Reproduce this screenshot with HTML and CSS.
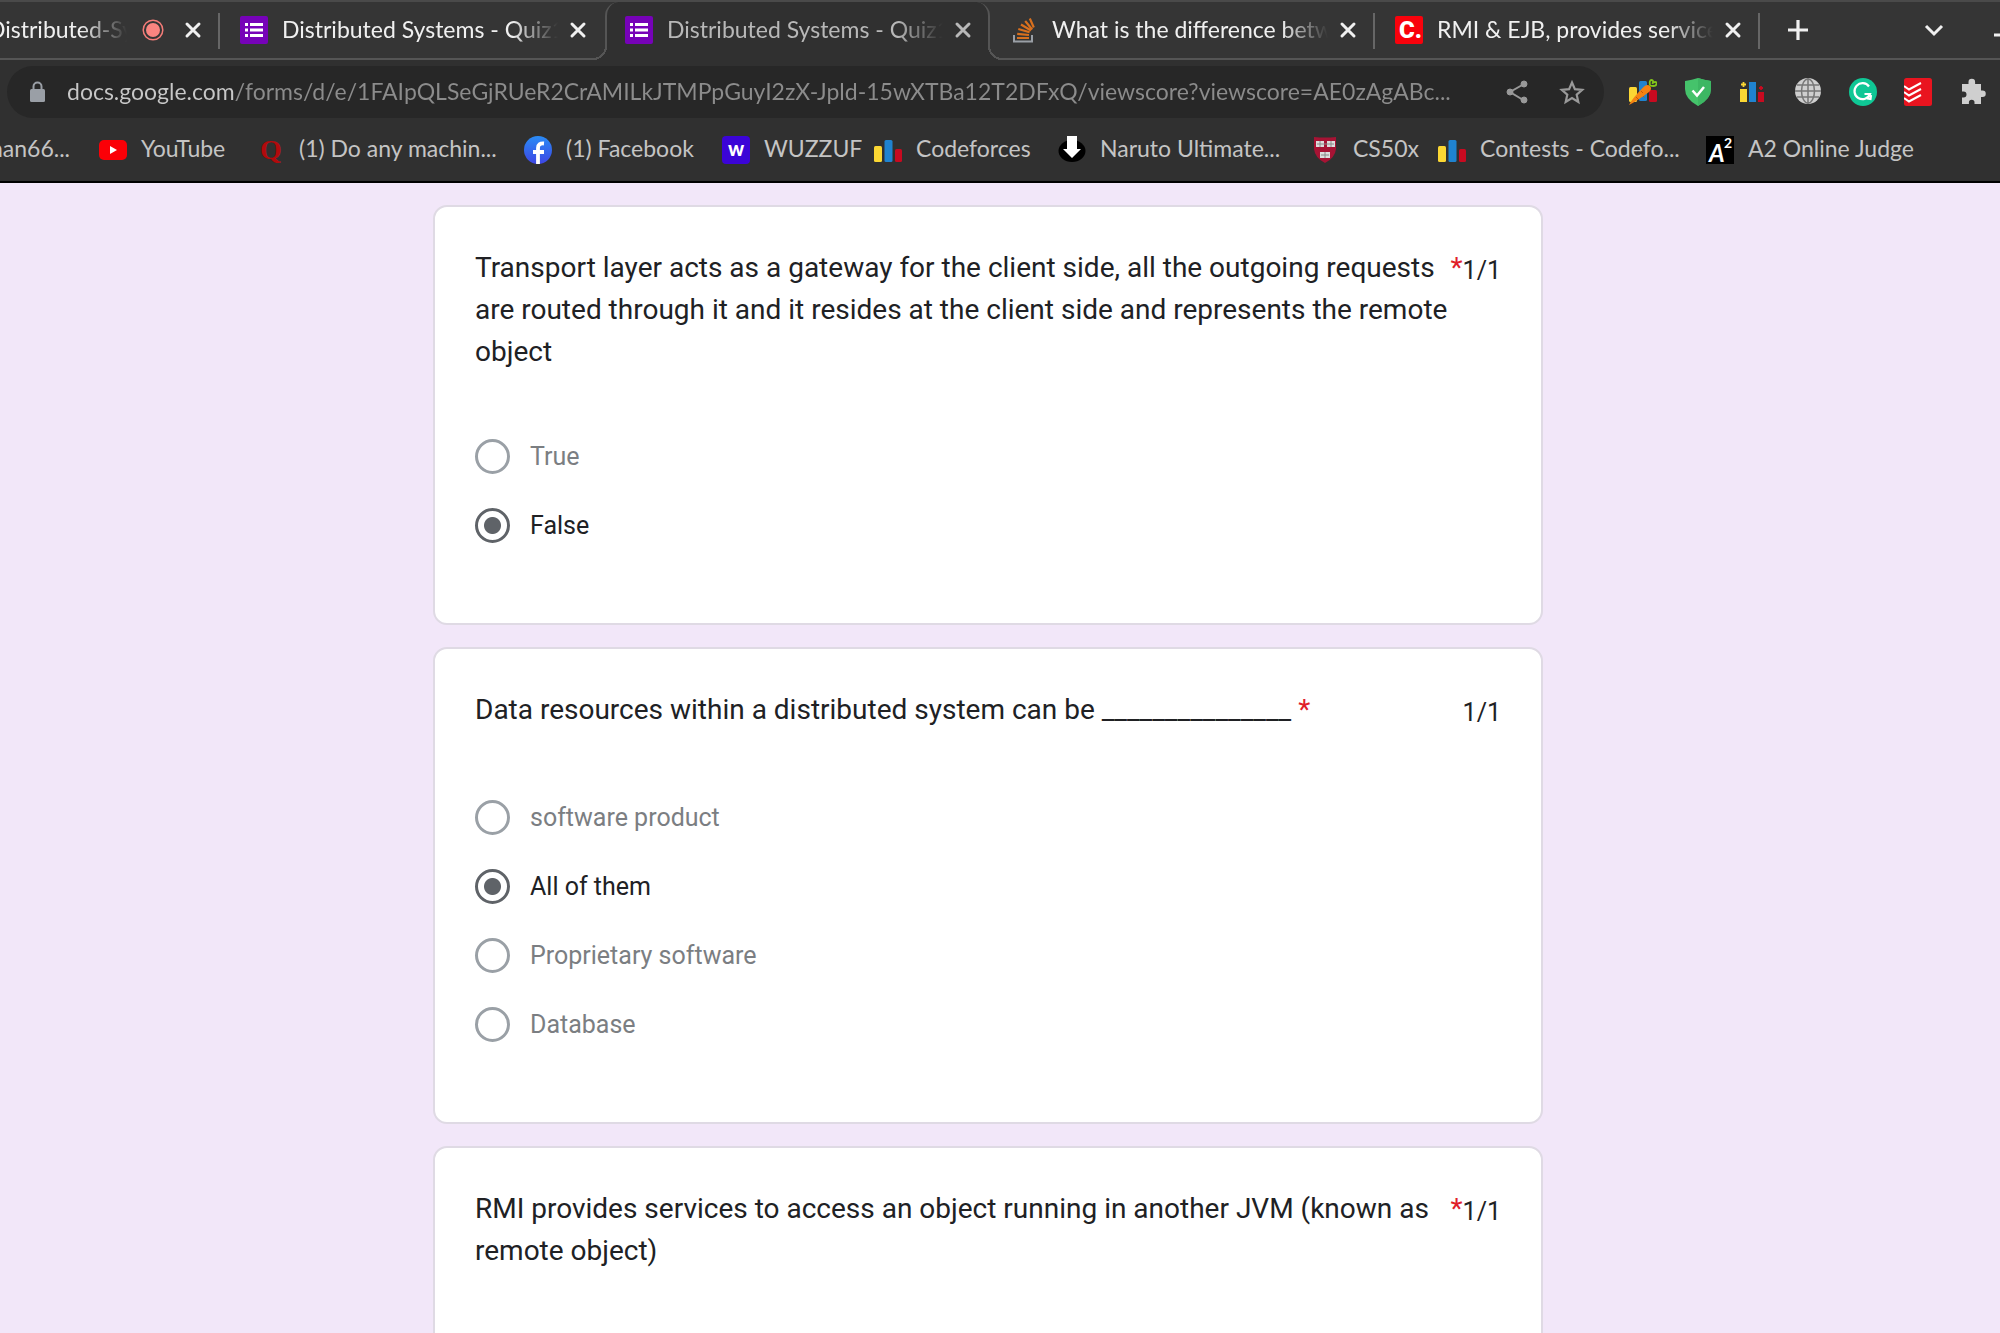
FILE: index.html
```html
<!DOCTYPE html>
<html lang="en">
<head>
<meta charset="utf-8">
<title>Distributed Systems - Quiz</title>
<link rel="stylesheet" href="styles.css">
</head>
<body>
<svg class="defs" aria-hidden="true">
  <symbol id="close" viewBox="0 0 28 28"><path d="M8 8l12 12M20 8L8 20" stroke="currentColor" stroke-width="3" stroke-linecap="round" fill="none"/></symbol>
  <symbol id="forms" viewBox="0 0 28 28"><rect width="28" height="28" rx="2" fill="#7602b8"/><path d="M5 7h3v3H5zM10 7h13v3H10zM5 12.500h3v3H5zM10 12.500h13v3H10zM5 18h3v3H5zM10 18h13v3H10z" fill="#fff"/></symbol>
  <symbol id="bars" viewBox="0 0 28 28"><rect y="10" width="8" height="16" rx="1.500" fill="#fbd733"/><rect x="10.500" y="4" width="8" height="22" rx="1.500" fill="#1f83d0"/><rect x="21" y="13" width="7" height="13" rx="1.500" fill="#c80a20"/></symbol>
</svg>
<header class="browser">
  <div class="tabs" role="tablist">
    <div class="tab tab-cut" role="tab">
      <span class="tab-title">Distributed-Sy</span>
      <svg class="icon" viewBox="0 0 28 28"><circle cx="14" cy="14" r="9.800" fill="none" stroke="#f47c78" stroke-width="1.500"/><circle cx="14" cy="14" r="7" fill="#fa8480"/></svg>
      <button class="close" aria-label="Close tab"><svg class="icon"><use href="#close"/></svg></button>
    </div>
    <div class="tab" role="tab">
      <svg class="icon"><use href="#forms"/></svg>
      <span class="tab-title">Distributed Systems - Quiz1</span>
      <button class="close" aria-label="Close tab"><svg class="icon"><use href="#close"/></svg></button>
    </div>
    <div class="tab tab-active" role="tab" aria-selected="true">
      <svg class="icon"><use href="#forms"/></svg>
      <span class="tab-title">Distributed Systems - Quiz1</span>
      <button class="close" aria-label="Close tab"><svg class="icon"><use href="#close"/></svg></button>
    </div>
    <div class="tab" role="tab">
      <svg class="icon" viewBox="0 0 28 28"><path d="M4 19v6.500h18V19" fill="none" stroke="#9a9fa6" stroke-width="2"/><path d="M7 22h12M7.200 17.800l11.800 1.200M8.300 13l11.300 3.200M11 8.500l10 6M15.200 5l7 8.500M19.800 2.500l4 9" stroke="#d9701e" stroke-width="2.200" fill="none"/></svg>
      <span class="tab-title">What is the difference betw</span>
      <button class="close" aria-label="Close tab"><svg class="icon"><use href="#close"/></svg></button>
    </div>
    <div class="tab" role="tab">
      <svg class="icon" viewBox="0 0 28 28"><rect width="28" height="28" rx="2" fill="#f9020c"/><text x="4" y="22" class="mark-c">C.</text></svg>
      <span class="tab-title">RMI &amp; EJB, provides service</span>
      <button class="close" aria-label="Close tab"><svg class="icon"><use href="#close"/></svg></button>
    </div>
    <button class="tool" aria-label="New tab"><svg class="icon" viewBox="0 0 28 28"><path d="M14 4v20M4 14h20" stroke="currentColor" stroke-width="3.200" fill="none"/></svg></button>
    <div class="window-tools">
      <button class="tool" aria-label="Search tabs"><svg class="icon" viewBox="0 0 28 28"><path d="M6 10l8 8 8-8" stroke="currentColor" stroke-width="3" fill="none"/></svg></button>
      <button class="tool" aria-label="Minimize"><svg class="icon" viewBox="0 0 28 28"><path d="M0 19h18" stroke="currentColor" stroke-width="3" fill="none"/></svg></button>
    </div>
  </div>
  <div class="toolbar">
    <div class="omnibox">
      <svg class="icon" viewBox="0 0 28 28"><rect x="6" y="11" width="15" height="13" rx="1.500" fill="#9a9fa6"/><path d="M9.500 12V8.500a4 4 0 0 1 8 0V12" fill="none" stroke="#9a9fa6" stroke-width="2"/></svg>
      <input class="url" type="text" aria-label="Address" value="docs.google.com/forms/d/e/1FAIpQLSeGjRUeR2CrAMILkJTMPpGuyI2zX-Jpld-15wXTBa12T2DFxQ/viewscore?viewscore=AE0zAgABc...">
      <button class="tool" aria-label="Share"><svg class="icon" viewBox="0 0 28 28"><g fill="#999" stroke="#999"><path d="M21 6L7 14l14 8.500" fill="none" stroke-width="2"/><circle cx="21" cy="6" r="3"/><circle cx="7" cy="14" r="3"/><circle cx="21" cy="22" r="3"/></g></svg></button>
      <button class="tool" aria-label="Bookmark this page"><svg class="icon" viewBox="0 0 28 28"><path d="M14 4.500l2.900 6.700 7.300.7-5.500 4.800 1.600 7.200L14 20.100l-6.300 3.800 1.600-7.200-5.500-4.800 7.300-.7z" fill="none" stroke="#999" stroke-width="2.200"/></svg></button>
    </div>
    <button class="tool" aria-label="Carrot"><svg class="icon" viewBox="0 0 28 28"><rect y="9" width="8" height="15" rx="1.500" fill="#fbd733"/><rect x="10" y="3" width="8" height="20" rx="1.500" fill="#1f83d0"/><rect x="20" y="12" width="8" height="12" rx="1.500" fill="#c80a20"/><path d="M0 27Q2 22 14 9.500q4-4 7-1.500 2.500 3-1 6Q8 23 0 27z" fill="#f58212"/><path d="M7 19l2 2M12 13l2 2M14 18l1.500 1.500" stroke="#c65c07"/><path d="M21 7.500Q20 2 22.500 2q2.500 0 1 4M21 7.500Q27 9 27.500 6T24 4.500" fill="none" stroke="#83c619" stroke-width="1.800"/></svg></button>
    <button class="tool" aria-label="Blocker"><svg class="icon" viewBox="0 0 28 28"><path d="M1 3q7-1 13-3 6 2 13 3v8q0 10-13 17Q1 21 1 11z" fill="#45c36b"/><path d="M14 0q6 2 13 3v8q0 10-13 17z" fill="#3db763"/><path d="M8.500 12.500l4.500 5 7-8.500" stroke="#fff" stroke-width="2.500" fill="none"/></svg></button>
    <button class="tool" aria-label="Ratings"><svg class="icon" viewBox="0 0 28 28"><path d="M1 11h7v13H1z" fill="#fbd733"/><path d="M10 4h7v20h-7z" fill="#1f83d0"/><path d="M19 14h6v10h-6z" fill="#c80a20"/><path d="M4.500 4v5M2 6.500h5" stroke="#fbd733" stroke-width="1.800"/><path d="M22 8v4M20 10h4" stroke="#c80a20" stroke-width="1.800"/></svg></button>
    <button class="tool" aria-label="Web"><svg class="icon" viewBox="0 0 28 28"><circle cx="14" cy="13" r="13" fill="#cfcfcf"/><g fill="none" stroke="#777" stroke-width="1.500"><ellipse cx="14" cy="13" rx="6.500" ry="12"/><path d="M14 0v26M1 13h26M3 7h22M3 19h22"/></g></svg></button>
    <button class="tool" aria-label="Writing help"><svg class="icon" viewBox="0 0 28 28"><circle cx="14" cy="14" r="14" fill="#0fc795"/><path d="M20 8.500A8 8 0 1 0 21 16h-5.500M18 20.500l3.500.5.500-4" fill="none" stroke="#fff" stroke-width="2.200"/></svg></button>
    <button class="tool" aria-label="Tasks"><svg class="icon" viewBox="0 0 28 28"><rect width="28" height="28" rx="2.500" fill="#e9141f"/><path d="M0 8l5 3.500L17 5M0 14l5 3.500L17 11M0 20l5 3.500L17 17" stroke="#fff" stroke-width="2" fill="none"/></svg></button>
    <button class="tool" aria-label="Extensions"><svg class="icon" viewBox="0 0 28 28"><path d="M3 6h6.500V4a3.300 3.300 0 0 1 6.600 0v2H22v6.500h1.500a3.200 3.200 0 0 1 0 6.500H22v7h-6.500v-1.500a2.800 2.800 0 0 0-5.600 0V26H3v-6.500h1.500a3 3 0 0 0 0-6H3z" fill="#cfcfcf"/></svg></button>
  </div>
  <nav class="bookmarks">
    <a class="bookmark" href="#"><span class="label">nan66...</span></a>
    <a class="bookmark" href="#"><svg class="icon" viewBox="0 0 28 28"><rect y="4" width="28" height="20" rx="5" fill="#fb0007"/><path d="M11 10l7 4-7 4z" fill="#fff"/></svg><span class="label">YouTube</span></a>
    <a class="bookmark" href="#"><svg class="icon" viewBox="0 0 28 28"><text x="3" y="23" class="mark-q">Q</text></svg><span class="label">(1) Do any machin...</span></a>
    <a class="bookmark" href="#"><svg class="icon" viewBox="0 0 28 28"><defs><linearGradient id="fb" x2="0" y2="1"><stop stop-color="#2a8cf5"/><stop offset="1" stop-color="#3d46e4"/></linearGradient></defs><circle cx="14" cy="14" r="14" fill="url(#fb)"/><path d="M14 28V12q0-5 6-4.500M9 16h11" fill="none" stroke="#fff" stroke-width="3.800"/></svg><span class="label">(1) Facebook</span></a>
    <a class="bookmark" href="#"><svg class="icon" viewBox="0 0 28 28"><rect width="28" height="28" rx="4" fill="#3b04d7"/><text x="14" y="20" class="mark-w">w</text></svg><span class="label">WUZZUF</span></a>
    <a class="bookmark" href="#"><svg class="icon"><use href="#bars"/></svg><span class="label">Codeforces</span></a>
    <a class="bookmark" href="#"><svg class="icon" viewBox="0 0 28 28"><ellipse cx="14" cy="15" rx="13.500" ry="11" fill="#000"/><path d="M9 0h10v13h4l-9 9-9-9h4z" fill="#fff"/></svg><span class="label">Naruto Ultimate...</span></a>
    <a class="bookmark" href="#"><svg class="icon" viewBox="0 0 28 28"><path d="M3 1q11 1 22 0v12q-1 9-11 14Q4 22 3 13z" fill="#a61334"/><path d="M5 5h8v6H5zM16 5h8v6h-8zM9 16h10v6H9z" fill="#ddd"/><path d="M9 5v6M20 5v6M14 16v6M6 8h17M10 19h8" stroke="#888"/></svg><span class="label">CS50x</span></a>
    <a class="bookmark" href="#"><svg class="icon"><use href="#bars"/></svg><span class="label">Contests - Codefo...</span></a>
    <a class="bookmark" href="#"><svg class="icon" viewBox="0 0 28 28"><rect width="28" height="28" fill="#000"/><text x="3" y="26" class="mark-a">A</text><text x="18" y="12" class="mark-2">2</text></svg><span class="label">A2 Online Judge</span></a>
  </nav>
</header>
<main class="page">
  <form class="quiz">
    <section class="card">
      <div class="question">
        <h2 class="title">Transport layer acts as a gateway for the client side, all the outgoing requests are routed through it and it resides at the client side and represents the remote object</h2>
        <span class="required">*</span>
        <span class="score">1/1</span>
      </div>
      <label class="option"><input type="radio" name="q1">True</label>
      <label class="option"><input type="radio" name="q1" checked>False</label>
    </section>
    <section class="card">
      <div class="question">
        <h2 class="title">Data resources within a distributed system can be _______________&nbsp;</h2>
        <span class="required">*</span>
        <span class="score">1/1</span>
      </div>
      <label class="option"><input type="radio" name="q2">software product</label>
      <label class="option"><input type="radio" name="q2" checked>All of them</label>
      <label class="option"><input type="radio" name="q2">Proprietary software</label>
      <label class="option"><input type="radio" name="q2">Database</label>
    </section>
    <section class="card">
      <div class="question">
        <h2 class="title">RMI provides services to access an object running in another JVM (known as remote object)</h2>
        <span class="required">*</span>
        <span class="score">1/1</span>
      </div>
      <label class="option"><input type="radio" name="q3" checked>True</label>
      <label class="option"><input type="radio" name="q3">False</label>
    </section>
  </form>
</main>
</body>
</html>
```
FILE: styles.css
```css
* { box-sizing: border-box; }

html, body { height: 100%; }

body {
  margin: 0;
  display: flex;
  flex-direction: column;
  overflow: hidden;
  background: #f2e7f9;
  font-family: Roboto, sans-serif;
}

button {
  padding: 0;
  border: 0;
  background: none;
  color: inherit;
}

.defs { display: none; }

.icon {
  display: block;
  flex: none;
  width: 28px;
  height: 28px;
}

/* Browser chrome */
.browser {
  flex: none;
  background: #303030;
  border-bottom: 2px solid #000;
  color: #c4c4c4;
  font-family: Lato, sans-serif;
  font-size: 23px;
}

.tabs {
  display: flex;
  align-items: center;
  height: 60px;
  overflow: hidden;
  background: #353535;
  border-top: 2px solid #4a4a4a;
  box-shadow: inset 0 -2px #555;
  color: #f0f0f0;
}

.tab {
  position: relative;
  display: flex;
  flex: 0 1 385px;
  align-items: center;
  min-width: 0;
  height: 58px;
  padding: 0 13px 2px 20px;
}

.tab::after {
  content: "";
  position: absolute;
  top: 11px;
  right: 0;
  width: 2px;
  height: 36px;
  background: #666;
}

.tab-cut {
  flex-basis: 220px;
  padding-left: 0;
}

.tab-title {
  flex: 1;
  min-width: 0;
  margin: 0 2px 0 14px;
  padding-bottom: 3px;
  overflow: hidden;
  white-space: nowrap;
  mask-image: linear-gradient(to left, transparent 4px, #000 50px);
}

.tab-cut .tab-title { margin: 0 8px 0 -12px; }

.tab-cut .close { margin-left: 12px; }

.tab-active {
  z-index: 1;
  padding: 0 11px 2px 18px;
  background: #303030;
  border: 2px solid #555;
  border-width: 0 2px;
  border-radius: 14px 14px 0 0;
  color: #b8b8b8;
}

/* Curved feet where the active tab meets the toolbar */
.tab-active::before,
.tab-active::after {
  content: "";
  position: absolute;
  top: auto;
  bottom: 0;
  width: 14px;
  height: 14px;
}

.tab-active::before {
  left: -14px;
  background: radial-gradient(circle at 0 0, #353535 12px, #555 12px 14px, #303030 14px);
}

.tab-active::after {
  right: -14px;
  background: radial-gradient(circle at 100% 0, #353535 12px, #555 12px 14px, #303030 14px);
}

.tab:has(+ .tab-active)::after { display: none; }

.tool {
  display: block;
  flex: none;
}

.tabs > .tool {
  margin-left: 24px;
  padding-bottom: 2px;
}

.window-tools {
  display: flex;
  gap: 46px;
  margin: 0 -22px 2px auto;
}

.toolbar {
  display: flex;
  align-items: center;
  gap: 27px;
  padding: 6px 13px 6px 7px;
}

.omnibox {
  display: flex;
  flex: 1;
  align-items: center;
  gap: 27px;
  min-width: 0;
  height: 52px;
  margin-right: -2px;
  padding: 0 18px 0 17px;
  border-radius: 26px;
  background: #272727;
}

.url {
  flex: 1;
  min-width: 0;
  margin-left: -12px;
  padding: 0 0 2px;
  border: 0;
  outline: 0;
  background: linear-gradient(to right, #c8c8c8 169px, #8c8c8c 169px);
  background-clip: text;
  -webkit-text-fill-color: transparent;
  font: inherit;
}

.bookmarks {
  display: grid;
  grid-template-columns: 99px 158px 267px 198px 152px 184px 253px 127px 268px auto;
  align-items: center;
  height: 57px;
  padding-bottom: 6px;
}

.bookmark {
  display: flex;
  align-items: center;
  gap: 14px;
  color: inherit;
  text-decoration: none;
  white-space: nowrap;
}

.bookmark:first-child {
  justify-content: flex-end;
  padding-right: 29px;
}

.label { padding-bottom: 4px; }

.mark-c { font: 900 24px Roboto, sans-serif; fill: #fff; }
.mark-q { font: bold 28px "Liberation Serif", serif; fill: #b20a0c; }
.mark-w { font: 900 20px Lato, sans-serif; fill: #fff; text-anchor: middle; }
.mark-a { font: italic bold 24px Lato, sans-serif; fill: #fff; }
.mark-2 { font: bold 14px Lato, sans-serif; fill: #fff; }

/* Quiz */
.page {
  flex: 1;
  min-height: 0;
  overflow: hidden;
  padding: 22px 24px 0 0;
}

.quiz {
  display: flex;
  flex-direction: column;
  gap: 22px;
  max-width: 1110px;
  margin: 0 auto;
}

.card {
  padding: 40px 40px 63px;
  border: 2px solid #dfdae4;
  border-radius: 14px;
  background: #fff;
  color: #202124;
  font-size: 25px;
}

.question {
  display: flex;
  min-height: 45px;
  margin-bottom: 49px;
  font-size: 28px;
  line-height: 42px;
}

.title {
  margin: 0;
  font: inherit;
}

.required { color: #e0202a; }

.score {
  margin-left: auto;
  padding-top: 3px;
  font-size: 25px;
}

.option {
  display: flex;
  align-items: center;
  gap: 20px;
  height: 69px;
  color: #7b7e82;
}

.option:has(:checked) { color: #202124; }

.option input {
  appearance: none;
  width: 35px;
  height: 35px;
  margin: 0;
  border: 3px solid #9aa0a6;
  border-radius: 50%;
}

.option input:checked {
  border-color: #5f6368;
  background: radial-gradient(circle, #5f6368 8px, transparent 9px);
}
```
